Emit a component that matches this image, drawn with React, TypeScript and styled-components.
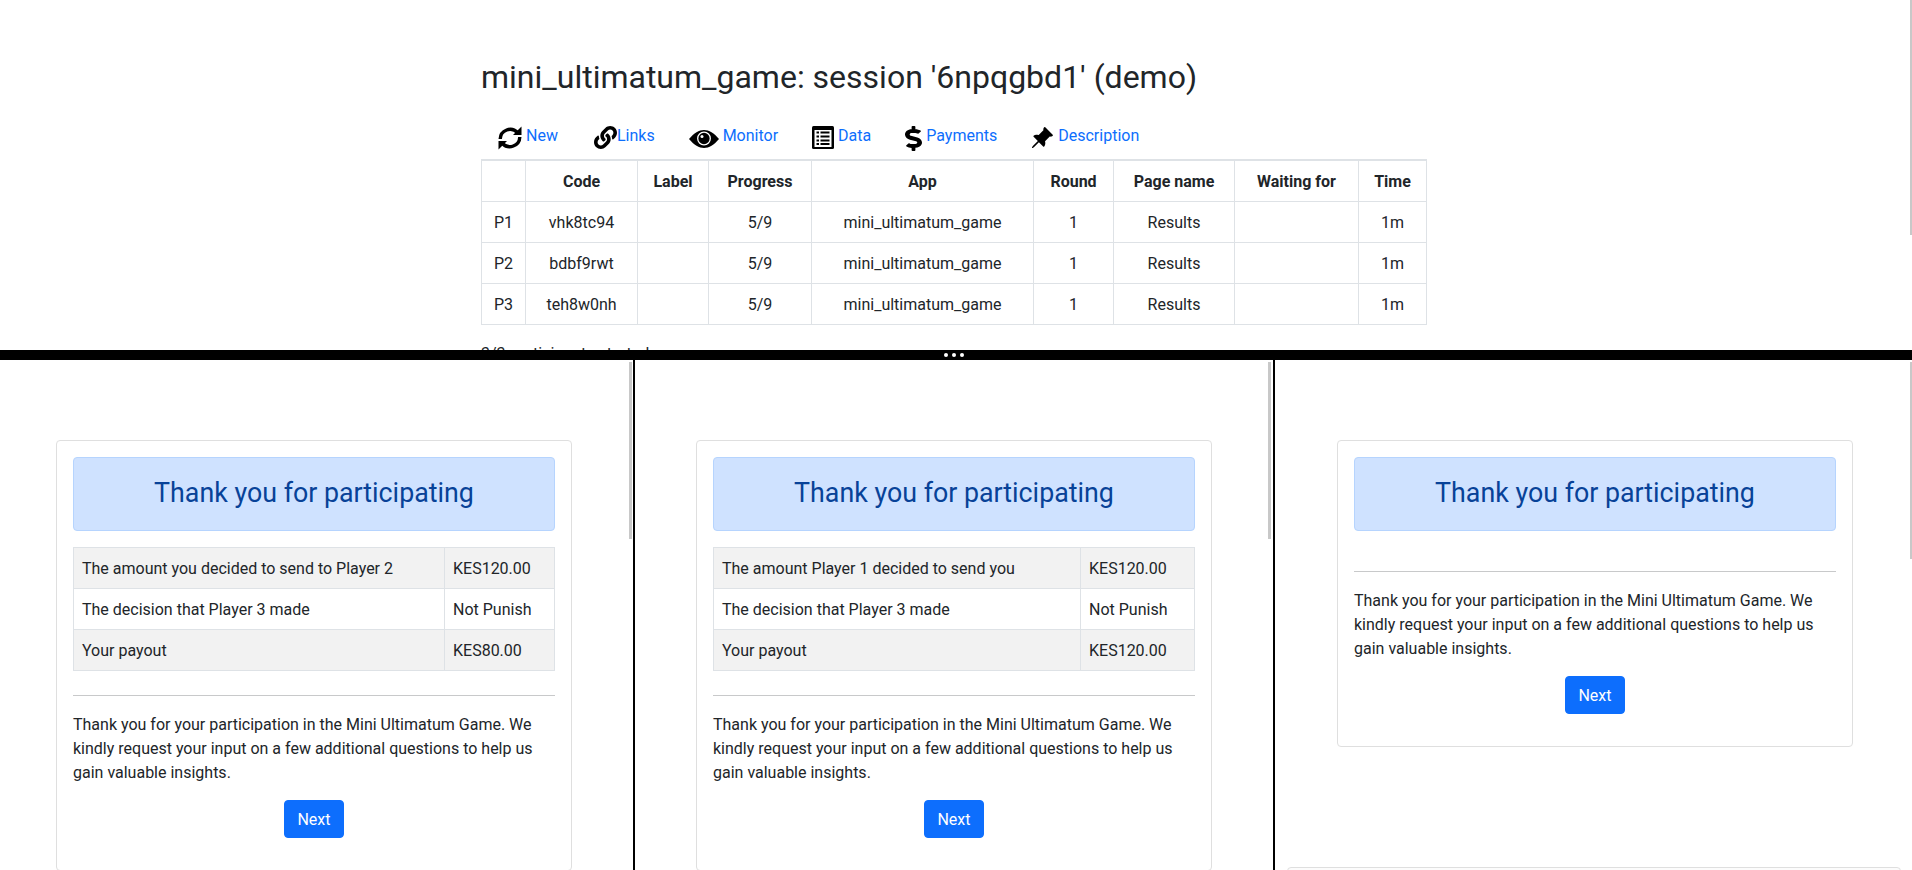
import styled, { createGlobalStyle } from 'styled-components'
import { FaLink, FaDollarSign } from 'react-icons/fa'
import { BsPinAngleFill } from 'react-icons/bs'

const FONT = `Roboto, "Noto Sans", "Liberation Sans", sans-serif`

const columns = [
  { title: '', width: 44 },
  { title: 'Code', width: 112 },
  { title: 'Label', width: 71 },
  { title: 'Progress', width: 103 },
  { title: 'App', width: 222 },
  { title: 'Round', width: 80 },
  { title: 'Page name', width: 121 },
  { title: 'Waiting for', width: 124 },
  { title: 'Time', width: 68 },
]

const participants = [
  { label: 'P1', code: 'vhk8tc94' },
  { label: 'P2', code: 'bdbf9rwt' },
  { label: 'P3', code: 'teh8w0nh' },
]

const panes = [
  {
    width: 633,
    left: 0,
    right: 5,
    thumb: 177,
    barRight: 1,
    barWidth: 3,
    valueWidth: 110,
    rows: [
      ['The amount you decided to send to Player 2', 'KES120.00'],
      ['The decision that Player 3 made', 'Not Punish'],
      ['Your payout', 'KES80.00'],
    ],
  },
  {
    width: 640,
    left: 0,
    right: 0,
    thumb: 177,
    barRight: 2,
    barWidth: 3,
    valueWidth: 114,
    rows: [
      ['The amount Player 1 decided to send you', 'KES120.00'],
      ['The decision that Player 3 made', 'Not Punish'],
      ['Your payout', 'KES120.00'],
    ],
  },
  { width: 639, left: 3, right: 0, thumb: 197, barRight: 0, barWidth: 2, valueWidth: 0, rows: [] },
]

const RefreshIcon = () => (
  <svg width="24" height="24" viewBox="0 0 24 24">
    <path d="M19.5 6.5A10 10 0 0 0 2.2 13" fill="none" stroke="#000" strokeWidth="3.4" />
    <path d="M4.5 17.5A10 10 0 0 0 21.8 11" fill="none" stroke="#000" strokeWidth="3.4" />
    <polygon points="23.5,0.5 23.5,9 15,9" fill="#000" />
    <polygon points="0.5,23.5 0.5,15 9,15" fill="#000" />
  </svg>
)

const ListIcon = () => (
  <svg width="22" height="23" viewBox="0 0 22 23">
    <rect width="22" height="23" rx="1.5" fill="#000" />
    <rect x="2.5" y="4" width="17" height="17" fill="#fff" />
    {[5.5, 9.5, 13.5, 17].map((y) => (
      <g key={y}>
        <rect x="4.5" y={y} width="2.5" height="2" fill="#000" />
        <rect x="8.5" y={y} width="9" height="2" fill="#000" />
      </g>
    ))}
  </svg>
)

const EyeIcon = () => (
  <EyeSvg width="30" height="18" viewBox="0 0 30 18">
    <path d="M0 9C5 3 10 0 15 0s10 3 15 9c-5 6-10 9-15 9S5 15 0 9z" fill="#000" />
    <circle cx="15" cy="8.500" r="6.300" fill="none" stroke="#fff" strokeWidth="1.300" />
    <circle cx="13" cy="6.500" r="1.500" fill="#fff" />
  </EyeSvg>
)

const App = () => {
  const navItems = [
    { label: 'New', gap: 4, before: 0, icon: <RefreshIcon /> },
    { label: 'Links', gap: 0, before: 2, icon: <FaLink size={23} /> },
    { label: 'Monitor', gap: 4, before: 0, icon: <EyeIcon /> },
    { label: 'Data', gap: 4, before: 0, icon: <ListIcon /> },
    { label: 'Payments', gap: 4, before: 0, icon: <DollarIcon preserveAspectRatio="none" /> },
    { label: 'Description', gap: 4, before: -1, icon: <BsPinAngleFill size={24} /> },
  ]

  return (
    <Page>
      <GlobalStyle />
      <TopPane>
        <Container>
          <Title>mini_ultimatum_game: session '6npqgbd1' (demo)</Title>
          <Nav>
            {navItems.map((item) => (
              <NavLink key={item.label} $gap={item.gap} $before={item.before}>
                {item.icon}
                <NavText>{item.label}</NavText>
              </NavLink>
            ))}
          </Nav>
          <SessionTable>
            <colgroup>
              {columns.map((col) => (
                <col key={col.title} style={{ width: col.width }} />
              ))}
            </colgroup>
            <thead>
              <tr>
                {columns.map((col) => (
                  <Th key={col.title}>{col.title}</Th>
                ))}
              </tr>
            </thead>
            <tbody>
              {participants.map((p) => (
                <tr key={p.label}>
                  <Td>{p.label}</Td>
                  <Td>{p.code}</Td>
                  <Td />
                  <Td>5/9</Td>
                  <Td>mini_ultimatum_game</Td>
                  <Td>1</Td>
                  <Td>Results</Td>
                  <Td />
                  <Td>1m</Td>
                </tr>
              ))}
            </tbody>
          </SessionTable>
          <Started>3/3 participants started.</Started>
        </Container>
        <Scrollbar $top={0} $right={0} $width={2} $height={235} />
      </TopPane>
      <Divider>
        <Dot />
        <Dot />
        <Dot />
      </Divider>
      <Frames>
        {panes.map((pane, i) => (
          <Frame key={i} $width={pane.width} $left={pane.left} $right={pane.right}>
            <Card>
              <Alert>
                <AlertTitle>Thank you for participating</AlertTitle>
              </Alert>
              {pane.rows.length > 0 ? (
                <ResultTable>
                  <colgroup>
                    <col />
                    <col style={{ width: pane.valueWidth }} />
                  </colgroup>
                  <tbody>
                    {pane.rows.map(([name, value]) => (
                      <tr key={name}>
                        <ResultCell>{name}</ResultCell>
                        <ResultCell>{value}</ResultCell>
                      </tr>
                    ))}
                  </tbody>
                </ResultTable>
              ) : null}
              <Rule />
              <Message>
                Thank you for your participation in the Mini Ultimatum Game. We
                kindly request your input on a few additional questions to help us
                gain valuable insights.
              </Message>
              <ButtonRow>
                <NextButton>Next</NextButton>
              </ButtonRow>
            </Card>
            {i === 2 ? <NextCard /> : null}
            <Scrollbar $top={2} $right={pane.barRight} $width={pane.barWidth} $height={pane.thumb} />
          </Frame>
        ))}
      </Frames>
    </Page>
  )
}

export default App

const GlobalStyle = createGlobalStyle`
  html, body {
    margin: 0;
    height: 100%;
    overflow: hidden;
    background: #fff;
  }
  body {
    font-family: ${FONT};
    font-size: 16px;
    line-height: 24px;
    color: #212529;
  }
`

const Page = styled.div`
  display: flex;
  flex-direction: column;
  width: 1912px;
  height: 870px;
  overflow: hidden;
`

const TopPane = styled.div`
  position: relative;
  height: 350px;
  flex: none;
  overflow: hidden;
  padding-right: 5px;
`

const Container = styled.div`
  width: 945px;
  margin: 0 auto;
  padding-top: 58px;
`

const Title = styled.h2`
  margin: 0;
  font-size: 32px;
  font-weight: 400;
  line-height: 38px;
`

const Nav = styled.div`
  display: flex;
  height: 63px;
  align-items: flex-start;
  padding: 30px 0 0 17px;
  box-sizing: border-box;
  gap: 34px;
`

const NavLink = styled.a<{ $gap: number; $before: number }>`
  display: flex;
  align-items: flex-start;
  gap: ${(p) => p.$gap}px;
  margin-left: ${(p) => p.$before}px;
  color: #000;
`

const NavText = styled.span`
  color: #0d6efd;
  margin-top: -2px;
`

const EyeSvg = styled.svg`
  margin-top: 4px;
`

const DollarIcon = styled(FaDollarSign)`
  width: 17px;
  height: 25px;
`

const SessionTable = styled.table`
  width: 945px;
  table-layout: fixed;
  border-collapse: collapse;
  border: 1px solid #dee2e6;
  border-top-width: 2px;
`

const Th = styled.th`
  padding: 9px 8px 7px;
  border: 1px solid #dee2e6;
  font-weight: 700;
  text-align: center;
`

const Td = styled.td`
  padding: 9px 8px 7px;
  border: 1px solid #dee2e6;
  text-align: center;
`

const Started = styled.p`
  margin: 17px 0 0;
`

const Scrollbar = styled.div<{ $top: number; $right: number; $width: number; $height: number }>`
  position: absolute;
  top: ${(p) => p.$top}px;
  right: ${(p) => p.$right}px;
  width: ${(p) => p.$width}px;
  height: ${(p) => p.$height}px;
  background: #c8c8c8;
`

const Divider = styled.div`
  display: flex;
  flex: none;
  height: 10px;
  align-items: center;
  justify-content: center;
  gap: 3.6px;
  padding-right: 4px;
  background: #000;
`

const Dot = styled.span`
  width: 4px;
  height: 4px;
  border-radius: 50%;
  background: #fff;
`

const Frames = styled.div`
  display: flex;
  flex: 1;
  min-height: 0;
`

const Frame = styled.div<{ $width: number; $left: number; $right: number }>`
  position: relative;
  flex: none;
  box-sizing: border-box;
  width: ${(p) => p.$width}px;
  padding: 80px ${(p) => p.$right}px 0 ${(p) => p.$left}px;
  overflow: hidden;
  & + & {
    border-left: 2px solid #000;
  }
`

const Card = styled.div`
  display: flex;
  flex-direction: column;
  box-sizing: border-box;
  width: 516px;
  margin: 0 auto;
  padding: 16px 16px 32px;
  border: 1px solid #dfdfdf;
  border-radius: 4px;
`

const NextCard = styled.div`
  height: 40px;
  margin: 120px 11px 0 9px;
  border: 1px solid #dfdfdf;
  border-radius: 4px;
  background: #fcfcfc;
`

const Alert = styled.div`
  box-sizing: border-box;
  height: 74px;
  margin-bottom: 16px;
  padding: 16px;
  border: 1px solid #b6d4fe;
  border-radius: 4px;
  background: #cfe2ff;
  color: #084298;
  text-align: center;
`

const AlertTitle = styled.h3`
  margin: 0;
  font-size: 26.8px;
  font-weight: 400;
  line-height: 38px;
`

const ResultTable = styled.table`
  width: 100%;
  table-layout: fixed;
  border-collapse: collapse;
  border: 1px solid #dee2e6;
  & tr:nth-child(odd) {
    background: #f2f2f2;
  }
`

const ResultCell = styled.td`
  padding: 9px 8px 7px;
  border: 1px solid #dee2e6;
`

const Rule = styled.hr`
  width: 100%;
  height: 1px;
  margin: 24px 0 16px;
  border: 0;
  background: #c8c9ca;
`

const Message = styled.p`
  margin: 0 0 15px;
  padding-top: 1px;
`

const ButtonRow = styled.div`
  display: flex;
  justify-content: center;
`

const NextButton = styled.button`
  height: 38px;
  padding: 2px 12px 0;
  border: 1px solid #0d6efd;
  border-radius: 4px;
  background: #0d6efd;
  color: #fff;
  font: inherit;
`
